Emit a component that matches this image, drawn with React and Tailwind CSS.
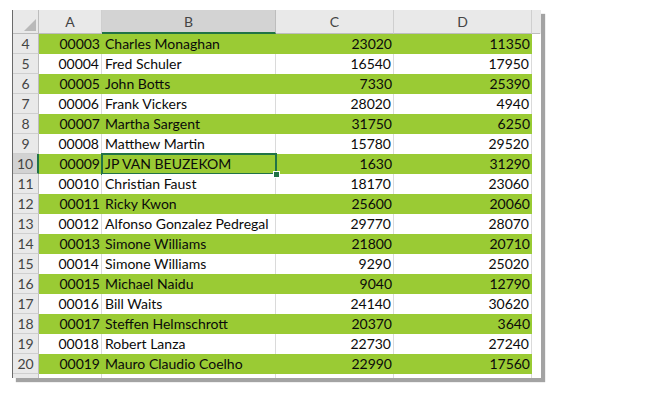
const rows = [
  [4, '00003', 'Charles Monaghan', 23020, 11350],
  [5, '00004', 'Fred Schuler', 16540, 17950],
  [6, '00005', 'John Botts', 7330, 25390],
  [7, '00006', 'Frank Vickers', 28020, 4940],
  [8, '00007', 'Martha Sargent', 31750, 6250],
  [9, '00008', 'Matthew Martin', 15780, 29520],
  [10, '00009', 'JP VAN BEUZEKOM', 1630, 31290],
  [11, '00010', 'Christian Faust', 18170, 23060],
  [12, '00011', 'Ricky Kwon', 25600, 20060],
  [13, '00012', 'Alfonso Gonzalez Pedregal', 29770, 28070],
  [14, '00013', 'Simone Williams', 21800, 20710],
  [15, '00014', 'Simone Williams', 9290, 25020],
  [16, '00015', 'Michael Naidu', 9040, 12790],
  [17, '00016', 'Bill Waits', 24140, 30620],
  [18, '00017', 'Steffen Helmschrott', 20370, 3640],
  [19, '00018', 'Robert Lanza', 22730, 27240],
  [20, '00019', 'Mauro Claudio Coelho', 22990, 17560],
]

function Row({ n, id, name, c, d }) {
  const green = n % 2 === 0
  const selected = n === 10
  const cell = green ? 'bg-[#9acb34]' : 'bg-white border-r border-[#dadada]'
  return (
    <div className="flex h-5 text-[14px] leading-5 text-[#0a0a0a]">
      <div
        className={
          'w-[26px] shrink-0 flex items-center justify-center border-b text-[#444] ' +
          (selected
            ? 'bg-[#d2d2d2] border-[#bdbdbd] border-r-2 border-r-[#217346]'
            : 'bg-[#e9e9e9] border-[#cfcfcf] border-r border-r-[#bdbdbd]')
        }
      >
        {n}
      </div>
      <div className={'w-[63px] shrink-0 text-right pr-[2px] ' + cell}>{id}</div>
      <div className={'w-[174px] shrink-0 pl-[3px] relative ' + cell}>
        {name}
        {selected && (
          <>
            <div className="absolute -left-[1px] -top-[1px] -right-[1px] -bottom-[1px] border-2 border-[#217346]" />
            <div className="absolute -right-[4px] -bottom-[4px] w-[7px] h-[7px] bg-[#217346] border border-white z-10" />
          </>
        )}
      </div>
      <div className={'w-[118px] shrink-0 text-right pr-[2px] ' + cell}>{c}</div>
      <div className={'w-[138px] shrink-0 text-right pr-[2px] ' + cell}>{d}</div>
      <div className="w-[8px] shrink-0 bg-white" />
    </div>
  )
}

export default function App() {
  return (
    <div className="w-[660px] h-[401px] bg-white overflow-hidden" style={{ fontFamily: 'Lato, "Open Sans", sans-serif' }}>
      <div className="ml-[12px] mt-[10px] w-[529px] border-l border-[#6b6b6b] shadow-[4px_4px_1px_#a3a3a3]">
        {/* column headers */}
        <div className="flex h-6 text-[14px] text-[#444] bg-[#e9e9e9]">
          <div className="w-[26px] shrink-0 relative border-r border-b border-[#bdbdbd]">
            <svg className="absolute right-[2px] bottom-[2px]" width="12" height="12" viewBox="0 0 12 12">
              <polygon points="12,0 12,12 0,12" fill="#b9b9b9" />
            </svg>
          </div>
          <div className="w-[63px] shrink-0 flex items-center justify-center border-r border-b border-[#cfcfcf] border-b-[#bdbdbd]">A</div>
          <div className="w-[174px] shrink-0 flex items-center justify-center bg-[#d3d3d3] border-r border-[#bdbdbd] border-b-2 border-b-[#217346]">B</div>
          <div className="w-[118px] shrink-0 flex items-center justify-center border-r border-b border-[#cfcfcf] border-b-[#bdbdbd]">C</div>
          <div className="w-[138px] shrink-0 flex items-center justify-center border-r border-b border-[#cfcfcf] border-b-[#bdbdbd]">D</div>
          <div className="w-[8px] shrink-0 border-b border-[#bdbdbd]" />
        </div>
        {rows.map(([n, id, name, c, d]) => (
          <Row key={n} n={n} id={id} name={name} c={c} d={d} />
        ))}
        {/* partial row 21 */}
        <div className="flex h-[4px]">
          <div className="w-[26px] shrink-0 bg-[#e9e9e9] border-r border-[#bdbdbd]" />
          <div className="w-[63px] shrink-0 border-r border-[#dadada]" />
          <div className="w-[174px] shrink-0 border-r border-[#dadada]" />
          <div className="w-[118px] shrink-0 border-r border-[#dadada]" />
          <div className="w-[138px] shrink-0 border-r border-[#dadada]" />
          <div className="w-[8px] shrink-0" />
        </div>
      </div>
    </div>
  )
}
